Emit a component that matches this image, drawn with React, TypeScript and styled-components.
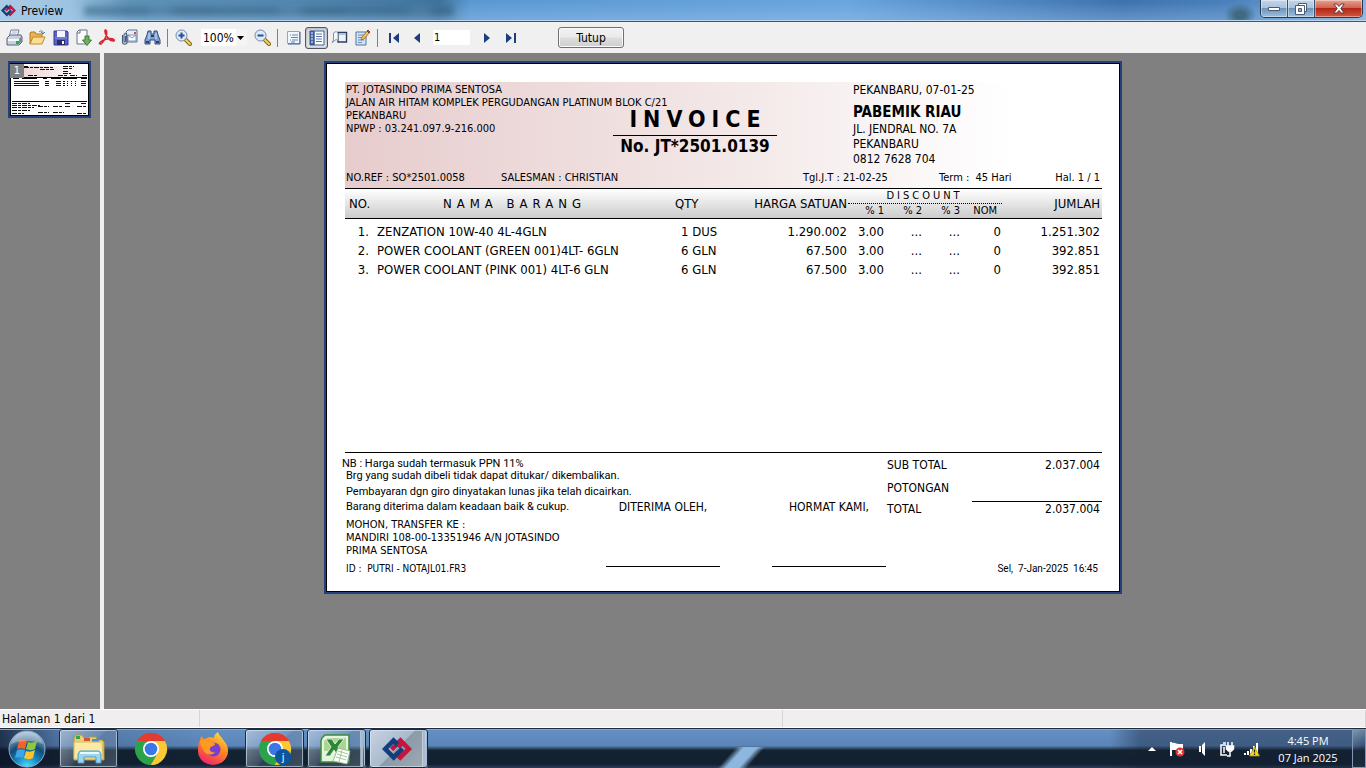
import React from "react";
import styled, { createGlobalStyle, css } from "styled-components";

const GlobalStyle = createGlobalStyle`
  *, *::before, *::after { box-sizing: border-box; }
  html, body, #root { height: 100%; }
  body {
    margin: 0;
    overflow: hidden;
    background: #808080;
    color: #000;
    font-family: "DejaVu Sans Condensed", "Noto Sans", sans-serif;
    font-size: 12px;
  }
  button, input, select { font: inherit; color: inherit; padding: 0; margin: 0; border: 0; border-radius: 0; }
  h1, h2, p, dl, dt, dd { margin: 0; font-weight: normal; }
  svg { display: block; flex: none; }
`;

const Desktop = styled.div`
  display: flex;
  flex-direction: column;
  height: 100%;
`;

/* ---------- window chrome ---------- */

const TitleBar = styled.header`
  display: flex;
  align-items: flex-start;
  justify-content: space-between;
  height: 22px;
  border-bottom: 1px solid #38577c;
  box-shadow: inset 0 -1px #b9d5f0;
  background:
    radial-gradient(ellipse 16px 12px at 1240px 15px, #3f6a80 30%, transparent),
    linear-gradient(180deg, transparent 10%, rgba(160, 200, 240, 0.35) 90%),
    linear-gradient(90deg, #a9cbe4 0, #9cc3df 70px, #5f93b8 130px, #5487b0 300px, #3f749c 440px, #5b98d2 470px, #6aa5dd 62%, #3f73ae 82%, #4a80bb 90%, #88b4de 100%);
`;

const WindowTitle = styled.h1`
  display: flex;
  align-items: center;
  gap: 5px;
  height: 21px;
  padding-left: 1px;
  font-size: 12px;
`;

const TitleGhost = styled.span`
  width: 370px;
  height: 10px;
  margin-left: 16px;
  background: repeating-linear-gradient(90deg, #2e5f80 0 60px, #447395 70px 80px, #2b5878 95px 130px);
  opacity: 0.55;
  filter: blur(3px);
`;

const WindowButtons = styled.div`
  display: flex;
  height: 18px;
  margin-right: 3px;
  border: 1px solid #25394f;
  border-top: 0;
  border-radius: 0 0 5px 5px;
  overflow: hidden;
`;

const WindowButton = styled.button<{ $close?: boolean }>`
  display: grid;
  place-items: center;
  width: ${(p) => (p.$close ? 47 : 27)}px;
  background: ${(p) =>
    p.$close
      ? "linear-gradient(#e9a08f 0, #d0644f 45%, #b3261a 50%, #d2583c 100%)"
      : "linear-gradient(#c3d6ea 0, #a9c2dd 45%, #6f94bb 50%, #9dbfe0 100%)"};
  border-right: ${(p) => (p.$close ? "0" : "1px solid #3b526d")};
  box-shadow: inset 0 0 0 1px rgba(255, 255, 255, 0.4);
`;

/* ---------- toolbar ---------- */

const Toolbar = styled.div`
  display: flex;
  align-items: center;
  height: 31px;
  padding-left: 3px;
  background: #f0f0f0;
`;

const ToolButton = styled.button<{ $pressed?: boolean }>`
  display: grid;
  place-items: center;
  width: 23px;
  height: 22px;
  background: none;
  ${(p) =>
    p.$pressed &&
    css`
      border: 1px solid #53585e;
      border-radius: 3px;
      background: linear-gradient(#cfd3d8, #e6e8ea);
      box-shadow: inset 0 0 2px #8a8f96;
    `}
`;

const Separator = styled.span`
  width: 1px;
  height: 18px;
  margin: 0 4px 0 3px;
  background: #808080;
`;

const ZoomBox = styled.div`
  display: flex;
  align-items: center;
  width: 46px;
  height: 17px;
  margin: 0 4px 0 6px;
  background: linear-gradient(90deg, #fff 35px, #f4f4f4 35px);
`;

const ZoomSelect = styled.select`
  appearance: none;
  width: 36px;
  height: 17px;
  padding-left: 2px;
  background: none;
  font-size: 12px;
`;

const PageInput = styled.input`
  width: 37px;
  height: 15px;
  margin: 0 6px 0 5px;
  padding-left: 1px;
  background: #fff;
  font-size: 11px;
`;

const CloseButton = styled.button`
  width: 66px;
  height: 21px;
  margin-left: 36px;
  border: 1px solid #707070;
  border-radius: 3px;
  background: linear-gradient(#f2f2f2 0, #ebebeb 48%, #dddddd 52%, #cfcfcf 100%);
  box-shadow: inset 0 0 0 1px #fafafa;
  font-size: 12px;
`;

/* ---------- preview area ---------- */

const Workspace = styled.main`
  display: flex;
  flex: 1;
  min-height: 0;
  background: #808080;
`;

const Thumbnails = styled.nav`
  width: 104px;
  padding: 8px;
  border-right: 4px solid #f0f0f0;
`;

const Thumbnail = styled.button`
  display: block;
  position: relative;
  width: 83px;
  height: 57px;
  border: 2px solid #24407a;
  outline: 0;
  background: #fff;
`;

const ThumbnailNumber = styled.span`
  position: absolute;
  top: 1px;
  left: 0;
  width: 14px;
  height: 14px;
  background: #808080;
  color: #fff;
  font-size: 11px;
  line-height: 14px;
`;

const Viewer = styled.section`
  flex: 1;
  display: flex;
  justify-content: center;
  align-items: flex-start;
  padding: 8px 24px 8px 0;
  overflow: hidden;
`;

const Sheet = styled.article`
  width: 798px;
  padding: 19px 18px 18px 19px;
  border: 2px solid #24407a;
  box-shadow: inset 0 0 0 1px #000;
  background: #fff;
`;

const Letterhead = styled.header`
  display: flex;
  flex-direction: column;
  justify-content: space-between;
  height: 107px;
  border-bottom: 1px solid #000;
  background: linear-gradient(90deg, #e7cccd 0, #f3e7e7 50%, #fff 88%);
`;

const LetterheadTop = styled.div`
  display: flex;
`;

const Company = styled.address`
  width: 268px;
  padding: 1px 0 0 1px;
  font-size: 11px;
  font-style: normal;
  line-height: 13px;
  white-space: pre;
`;

const InvoiceTitle = styled.div`
  width: 164px;
  padding-top: 25px;
  text-align: center;
  font-weight: bold;
`;

const InvoiceName = styled.h2`
  padding: 0 0 4px 6px;
  border-bottom: 1px solid #000;
  font-size: 23px;
  font-weight: bold;
  line-height: 24px;
  letter-spacing: 6px;
`;

const InvoiceNumber = styled.p`
  font-size: 17px;
  font-weight: bold;
  line-height: 21px;
  white-space: nowrap;
`;

const Customer = styled.address`
  padding: 1px 0 0 76px;
  font-style: normal;
  line-height: 15px;
`;

const CustomerName = styled.strong`
  display: block;
  margin-top: 4px;
  font-size: 15px;
  line-height: 20px;
`;

const MetaRow = styled.div`
  display: grid;
  grid-template-columns: 155px 302px 136px 1fr auto;
  padding: 0 2px 2px 1px;
  font-size: 11px;
  line-height: 16px;
  white-space: pre;
`;

const ItemsArea = styled.div`
  min-height: 264px;
  border-bottom: 1px solid #000;
`;

const ItemsTable = styled.table`
  width: 100%;
  table-layout: fixed;
  border-collapse: separate;
  border-spacing: 0;
  white-space: pre;

  thead { background: linear-gradient(#fff, #cacaca); }
  tbody::before { content: ""; display: block; height: 3px; }
`;

type CellProps = { $align?: "left" | "right" | "center"; $indent?: number; $end?: number; $track?: number };

const HeadCell = styled.th<CellProps>`
  height: 14px;
  padding: 1px ${(p) => p.$end ?? 1}px 0 ${(p) => p.$indent ?? 0}px;
  border-bottom: 1px solid #000;
  font-size: 13px;
  font-weight: normal;
  line-height: 14px;
  letter-spacing: ${(p) => p.$track ?? 0}px;
  text-align: ${(p) => p.$align ?? "left"};
`;

const DiscountHead = styled(HeadCell)`
  padding-top: 0;
  border-bottom: 1px dotted #000;
  font-size: 11px;
`;

const SubHead = styled(HeadCell)`
  padding-top: 0;
  font-size: 11px;
`;

const Cell = styled.td<CellProps>`
  height: 19px;
  padding: 0 ${(p) => p.$end ?? 1}px 0 ${(p) => p.$indent ?? 0}px;
  font-size: 13px;
  line-height: 19px;
  text-align: ${(p) => p.$align ?? "right"};
`;

const ItemFooter = styled.footer`
  display: flex;
  height: 121px;
`;

const Notes = styled.div`
  width: 265px;
  margin-left: -4px;
  padding-top: 5px;
  font-size: 11px;
  white-space: pre;
`;

const NoteBlock = styled.p<{ $line: number; $gap?: number; $indent?: boolean; $small?: boolean; $prose?: boolean }>`
  margin-top: ${(p) => p.$gap ?? 0}px;
  padding-left: ${(p) => (p.$indent ? 5 : 1)}px;
  line-height: ${(p) => p.$line}px;
  font-size: ${(p) => (p.$small ? 10 : 11)}px;
  ${(p) => p.$prose && "font-family: Roboto, sans-serif;"}
`;

const Signature = styled.div`
  width: 114px;
  height: 67px;
  margin: 47px 52px 0 0;
  border-bottom: 1px solid #000;
  line-height: 15px;
  text-align: center;
  white-space: nowrap;

  & + & { margin-right: 1px; }
`;

const Totals = styled.div`
  flex: 1;
  display: flex;
  flex-direction: column;
  justify-content: space-between;
  padding-top: 1px;
`;

const TotalsList = styled.dl`
  display: grid;
  grid-template-columns: 1fr 130px;
  line-height: 23px;

  dd { padding-right: 2px; text-align: right; }
`;

const GrandLabel = styled.dt`
  padding-top: 2px;
  line-height: 15px;
`;

const GrandTotal = styled.dd`
  margin-top: 1px;
  border-top: 1px solid #000;
  line-height: 15px;
`;

const PrintedAt = styled.p`
  padding-right: 4px;
  font-family: Roboto, sans-serif;
  font-size: 10px;
  line-height: 11px;
  text-align: right;
  white-space: pre;
`;

const StatusBar = styled.div`
  display: flex;
  align-items: center;
  height: 19px;
  border-top: 1px solid #fff;
  border-bottom: 1px solid #fff;
  background: #f0eeee;
`;

const StatusPane = styled.span<{ $width?: number }>`
  ${(p) => (p.$width ? `width: ${p.$width}px;` : "flex: 1;")}
  height: 17px;
  padding-left: 2px;
  border-right: 1px solid #d6d4d4;
  font-size: 12px;
  line-height: 19px;
`;

/* ---------- taskbar ---------- */

const Taskbar = styled.footer`
  display: flex;
  align-items: center;
  height: 40px;
  border-top: 1px solid #1d2c40;
  box-shadow: inset 0 1px #86a8d0;
  background:
    linear-gradient(90deg, rgba(10, 20, 40, 0.75) 0, rgba(10, 20, 40, 0.2) 60px, transparent 220px, transparent 1110px, rgba(20, 30, 50, 0.4) 1140px),
    linear-gradient(132deg, transparent 31%, #8db7de 42%, #8db7de 58%, transparent 69%) 712px 18px / 58px 22px no-repeat,
    linear-gradient(#6490c2 0, #5b85b9 43%, #3b5a80 48%, #142330 55%, #122031 90%, #2c4058 100%);
`;

const StartButton = styled.button`
  display: grid;
  place-items: center;
  width: 54px;
  margin-right: 5px;
  background: none;
`;

const TaskButton = styled.button<{ $state?: "open" | "active"; $stacked?: boolean }>`
  display: grid;
  place-items: center;
  width: 59px;
  height: 39px;
  margin-right: 3px;
  border: 1px solid transparent;
  background: none;
  ${(p) =>
    p.$state &&
    css`
      border-color: #a7bbd0;
      border-radius: 3px;
      outline: 1px solid #1a2a3c;
      outline-offset: -1px;
      box-shadow: inset 0 0 0 1px rgba(230, 240, 250, 0.55);
      background: ${p.$state === "active"
        ? "linear-gradient(135deg, #c6d3e4 0, #a9b9cc 50%, #8c9baa 51%, #9ea8b1 100%)"
        : "linear-gradient(135deg, rgba(200, 215, 235, 0.65), rgba(150, 170, 195, 0.35) 48%, rgba(110, 130, 150, 0.3) 52%, rgba(140, 160, 180, 0.35))"};
    `}
  ${(p) =>
    p.$stacked &&
    css`
      border-right: 5px double #a7bbd0;
    `}
`;

const Tray = styled.div`
  display: flex;
  align-items: center;
  gap: 9px;
  margin-left: auto;
`;

const TrayButton = styled.button`
  display: grid;
  place-items: center;
  width: 16px;
  height: 20px;
  background: none;
`;

const Clock = styled.time`
  width: 84px;
  margin-left: -3px;
  color: #fff;
  font-family: "Open Sans", sans-serif;
  font-size: 11px;
  line-height: 17px;
  text-align: center;
`;

const ShowDesktop = styled.button`
  width: 14px;
  height: 39px;
  margin-left: -7px;
  border: 1px solid #8298b2;
  background: linear-gradient(150deg, rgba(180, 200, 220, 0.5), rgba(40, 60, 80, 0.3) 50%);
`;

/* ---------- drawings ---------- */

const BrandIcon = ({ size, height }: { size: number; height: number }) => (
  <svg width={size} height={height} viewBox="0 0 30 24" fill="none" strokeWidth="4.6">
    <path d="M9.500 12.500L18.500 3.500 26.800 12l-8.500 8.500-5-5" stroke="#c8143c" />
    <path d="M16.500 8.500l-5-5L3.200 12l8.500 8.500 8.800-8.800" stroke="#123f7c" />
    <path d="M20.500 5.500L16 10" stroke="#c8143c" />
  </svg>
);

const PrintIcon = () => (
  <svg width="17" height="17" viewBox="0 0 17 17">
    <path d="M5 1h8l-2 7H3z" fill="#fff" stroke="#6b7c96" />
    <path d="M1 9l3-3h11l1 2v5l-3 3H1z" fill="#c9d1de" stroke="#58677f" />
    <path d="M2 10h11v2H2z" fill="#f7f9fc" />
    <path d="M13 10l3-3v5l-3 3z" fill="#7988a0" />
    <path d="M10 12h3v3h-3z" fill="#35a83a" />
    <path d="M6 3h5M5 5h5" stroke="#9fb0c8" />
  </svg>
);
const OpenIcon = () => (
  <svg width="17" height="17" viewBox="0 0 17 17">
    <path d="M1 15V4l1-1h4l1 2h6v3" fill="#e6b455" stroke="#b37a1f" />
    <path d="M1 15l3-7h12l-3 7z" fill="#fbdd8d" stroke="#c08a2c" />
    <path d="M10 3c2-2 4-1 4 1m-2-1l2 2 2-2" fill="none" stroke="#5877a8" />
  </svg>
);
const SaveIcon = () => (
  <svg width="16" height="16" viewBox="0 0 16 16">
    <path d="M1 1h13l1 1v13H1z" fill="#5a62c8" stroke="#353b92" />
    <path d="M4 1h8v6H4z" fill="#f3f5ff" />
    <path d="M4 10h8v5H4z" fill="#272e70" />
    <path d="M9 11h2v3H9z" fill="#fff" />
    <path d="M2 8h12" stroke="#8b93e8" />
  </svg>
);
const ExportIcon = () => (
  <svg width="17" height="17" viewBox="0 0 17 17">
    <path d="M2 3l2-2h8v14H2z" fill="#f8fafc" stroke="#66758c" />
    <path d="M2 4h3V1" fill="none" stroke="#66758c" />
    <path d="M10 7h4v4h2.500L12 16.500 7.500 11H10z" fill="#6fae5c" stroke="#3f7b34" />
  </svg>
);
const PdfIcon = () => (
  <svg width="17" height="17" viewBox="0 0 17 17" fill="none" stroke="#d9272e" strokeWidth="1.600">
    <path d="M7.500 1c-1.500 1 0 4 1.500 6.500S13.500 12 16 12c1-2-3-3-7-2s-7 3-7.500 4.500C3 16.500 6 12 7.500 8.500S9 2 7.500 1z" />
  </svg>
);
const MailIcon = () => (
  <svg width="17" height="17" viewBox="0 0 17 17" fill="none">
    <path d="M5 3l2-2h9v12H6z" fill="#e7eef8" stroke="#5a7096" />
    <path d="M7 6h8v6H7z" fill="#fff" stroke="#7c92b7" />
    <path d="M7 6l4 3 4-3" stroke="#7c92b7" />
    <path d="M13 3h2v2h-2z" fill="#d9483c" />
    <path d="M1.500 6v7c0 3 4.500 3 4.500 0V6c0-2-3-2-3 0v6c0 1.500 1.500 1.500 1.500 0V7" stroke="#44597e" strokeWidth="1.100" />
  </svg>
);
const FindIcon = () => (
  <svg width="17" height="17" viewBox="0 0 17 17">
    <path d="M4 2h3v3h3V2h3l1 4 2 5v4h-5v-4H6v4H1v-4l2-5z" fill="#7f9fd0" stroke="#2f4a80" />
    <path d="M2 12h3v2H2zM12 12h3v2h-3z" fill="#27407a" />
    <path d="M5 4v6M12 4v6" stroke="#d5e2f6" />
    <path d="M7 7h3" stroke="#27407a" strokeWidth="2" />
  </svg>
);
const LensIcon = ({ plus }: { plus?: boolean }) => (
  <svg width="17" height="17" viewBox="0 0 17 17">
    <path d="M10 10l5 5" stroke="#8c6a1c" strokeWidth="4" strokeLinecap="round" />
    <path d="M11 11l4 4" stroke="#f2cf5a" strokeWidth="2" strokeLinecap="round" />
    <circle cx="6.500" cy="6.500" r="5.500" fill="#dcebf9" stroke="#6f86a8" />
    <path d={plus ? "M3.500 6.500h6M6.500 3.500v6" : "M3.500 6.500h6"} stroke="#2b4f8c" strokeWidth="2" />
  </svg>
);
const FullPageIcon = () => (
  <svg width="14" height="14" viewBox="0 0 14 14">
    <path d="M.5.5h12v12H.5z" fill="#f2f7fd" stroke="#8ba7d0" />
    <path d="M1 13h12V1" fill="none" stroke="#3f5c8c" />
    <path d="M3 4h1M5 4h6M4 6.500h7M3 9h1M5 9h6M4 11h4" stroke="#6482b8" />
  </svg>
);
const OutlineIcon = () => (
  <svg width="16" height="16" viewBox="0 0 16 16">
    <path d="M5 1h10v14H5z" fill="#fff" stroke="#3d6199" />
    <path d="M1 1h4v14H1z" fill="#4b6fa8" stroke="#2f5087" />
    <path d="M2 3h2M2 6h2M2 9h2M2 12h2" stroke="#e3edfb" />
    <path d="M7 4h6M7 6.500h6M7 9h6M7 11.500h6" stroke="#5478b4" />
  </svg>
);
const MarginIcon = () => (
  <svg width="17" height="15" viewBox="0 0 17 15">
    <path d="M7 2.500h8.500v9.500H7z" fill="#eef3fa" stroke="#2b3f5c" strokeWidth="1.400" />
    <path d="M1 13l1.500-3V3L5 1.500 7 3v7.500L5 9.500 3 11z" fill="#f7fafd" stroke="#7f93ae" />
    <path d="M8 4h6.500" stroke="#b2c4de" strokeWidth="2" />
  </svg>
);
const EditIcon = () => (
  <svg width="16" height="17" viewBox="0 0 16 17">
    <path d="M1 3h10v13H1z" fill="#d7e4f6" stroke="#55739f" />
    <path d="M3 6h6M3 8.500h6M3 11h6M3 13.500h4" stroke="#6a8abd" />
    <path d="M6 11l1-3 6-7 2 2-6 7z" fill="#efc45b" stroke="#8d6a2b" strokeWidth=".8" />
    <path d="M12 2l1-1 2 2-1 1z" fill="#d0463c" stroke="#a03028" />
  </svg>
);
const NavIcon = ({ kind }: { kind: "first" | "prev" | "next" | "last" }) => (
  <svg width="12" height="12" viewBox="0 0 12 12" fill="#1f3d7c">
    {kind === "first" && <path d="M1 1h2v10H1zM11 1v10L5 6z" />}
    {kind === "prev" && <path d="M9 1v10L3 6z" />}
    {kind === "next" && <path d="M2 1v10l6-5z" />}
    {kind === "last" && <path d="M9 1h2v10H9zM1 1v10l6-5z" />}
  </svg>
);

const textLine = (x: number, y: number, w: number) => `M${x} ${y}h${w}`;
const ThumbnailDrawing = () => (
  <svg width="79" height="53" viewBox="0 0 79 53" shapeRendering="crispEdges">
    <defs>
      <linearGradient id="thumbTint">
        <stop offset="0" stopColor="#e9d0d1" />
        <stop offset="1" stopColor="#fff" />
      </linearGradient>
    </defs>
    <path d="M.5.5h78v52H.5z" fill="#fff" stroke="#000" />
    <path d="M2 2.500h75v11H2z" fill="url(#thumbTint)" />
    <path d="M2 14h75M2 38.500h75" stroke="#000" />
    <path
      d={[
        [14, 3.500, 4], [14, 4.500, 30], [53, 3.500, 11], [30, 6.500, 14], [53, 5.500, 10], [53, 8.500, 6], [53, 10.500, 8],
        [2, 12.500, 10], [18, 12.500, 10], [48, 12.500, 9], [60, 12.500, 7], [72, 12.500, 5],
        [2, 40.500, 18], [2, 42.500, 28], [2, 44.500, 22], [28, 43.500, 11], [43, 43.500, 10], [55, 40.500, 6],
        [55, 43.500, 5], [71, 40.500, 5], [67, 43.500, 10], [2, 47.500, 18], [2, 50.500, 12], [28, 49.500, 11], [43, 49.500, 11], [67, 50.500, 9],
      ].map(([x, y, w]) => textLine(x, y, w)).join("")}
      stroke="#111"
      strokeDasharray="5 1 3 1"
    />
    <path d="M3 15.500h6M12 15.500h15M33 15.500h4M41 15.500h10M53 15.500h14M71 15.500h6" stroke="#000" />
    {[18.5, 20.5, 22.5].map((y) => (
      <path key={y} d={`M4 ${y}h25M35 ${y}h4M46 ${y}h5M53 ${y}h2M57 ${y}h1M61 ${y}h1M65 ${y}h1M71 ${y}h5`} stroke="#111" />
    ))}
  </svg>
);

const StartOrb = () => (
  <svg width="38" height="38" viewBox="0 0 38 38">
    <defs>
      <radialGradient id="orb" cx=".5" cy="1" r="1">
        <stop offset="0" stopColor="#4fe0ff" />
        <stop offset=".35" stopColor="#1583bd" />
        <stop offset=".6" stopColor="#144a78" />
        <stop offset="1" stopColor="#a9c3da" />
      </radialGradient>
    </defs>
    <circle cx="19" cy="19" r="18" fill="url(#orb)" stroke="#8fb0cb" />
    <path d="M11 11c3-2 5-1 8 0l-2 8c-3-1-5-1-8 0z" fill="#f0642c" />
    <path d="M20 12c3 1 5 1 9-1l-2 8c-4 2-6 1-9 0z" fill="#8dc63f" />
    <path d="M9 20c3-1 5-1 8 0l-2 8c-3-1-5-1-8 0z" fill="#3fa4ea" />
    <path d="M18 21c3 1 5 1 9-1l-2 8c-4 2-6 1-9 0z" fill="#fcc42a" />
    <path d="M3 14C6 4 13 2 19 2s13 2 16 12c-8-4-24-4-32 0z" fill="#fff" opacity=".3" />
  </svg>
);
const ExplorerIcon = () => (
  <svg width="34" height="32" viewBox="0 0 34 32">
    <path d="M2 5l2-3h6l2 3h4l1-1h7l1 3h5l2 2v18H2z" fill="#e9cf78" stroke="#b8983c" />
    <path d="M4 3h4v3H4z" fill="#33a544" />
    <path d="M12 5h6v3h-6z" fill="#d4532f" />
    <path d="M20 6h7v3h-7z" fill="#4b8fd6" />
    <path d="M2 9h28l1 17H2z" fill="#fbe9a5" stroke="#d9bc62" />
    <path d="M6 30V21l2-3h19l2 3v9h-5v-6H12v6z" fill="#9fd4ef" stroke="#4b9dc8" />
    <path d="M8 20h19" stroke="#e8f8ff" strokeWidth="2" />
  </svg>
);
const ChromeIcon = ({ badge }: { badge?: string }) => (
  <svg width="34" height="34" viewBox="0 0 34 34">
    <path d="M17 17L3.100 9A16 16 0 0 1 30.900 9z" fill="#e33b2e" />
    <path d="M17 17L30.900 9A16 16 0 0 1 17 33z" fill="#fcc934" />
    <path d="M17 17v16A16 16 0 0 1 3.100 9z" fill="#2ba24c" />
    <path d="M17 9h13.900L24 21z" fill="#fcc934" />
    <path d="M3.100 9L10 21l7-4-4-8z" fill="#2ba24c" />
    <path d="M3.100 9h27.800a16 16 0 0 0-27.800 0z" fill="#e33b2e" />
    <path d="M24 21l-7 12-5-1 5-7z" fill="#2ba24c" />
    <path d="M24 21l-7 12a16 16 0 0 0 8-2z" fill="#fcc934" />
    <circle cx="17" cy="17" r="8" fill="#fff" />
    <circle cx="17" cy="17" r="6.300" fill="#3b78e7" />
    {badge && (
      <>
        <circle cx="25" cy="25" r="8" fill="#0c56a0" />
        <text x="25" y="29" fill="#fff" fontSize="11" textAnchor="middle">{badge}</text>
      </>
    )}
  </svg>
);
const FirefoxIcon = () => (
  <svg width="32" height="34" viewBox="0 0 32 34">
    <defs>
      <linearGradient id="fox" x1=".8" y1="0" x2=".3" y2="1">
        <stop offset="0" stopColor="#ffe14a" />
        <stop offset=".45" stopColor="#ff8a1f" />
        <stop offset="1" stopColor="#f0246a" />
      </linearGradient>
    </defs>
    <path d="M3 8c0-2 1-3 2-4 0 2 1 3 3 3 3-2 6-2 9-1 0-3 2-5 4-6 1 4 4 5 6 9 3 3 4 7 4 10a15 14 0 0 1-30 0c0-4 0-8 2-11z" fill="url(#fox)" />
    <circle cx="16.500" cy="17.500" r="7" fill="#7a3fd0" />
    <path d="M3 9c4-2 7-1 10 1 3 0 5 1 5 2 0 2-4 2-5 4-1 3 2 5 5 4-3 4-9 3-11-1-2-3-4-6-4-10z" fill="#ff9a21" />
  </svg>
);
const ExcelIcon = () => (
  <svg width="32" height="32" viewBox="0 0 32 32">
    <path d="M3 5l3-3h24v27H2V8z" fill="#e6f3e0" stroke="#3d8a3c" strokeWidth="1.500" />
    <path d="M5 8l3-3h19v13H5z" fill="#a9d793" />
    <path d="M7 6h6l3 5 4-5h5l-6 8 6 9h-6l-4-6-4 6H6l6-9z" fill="#2f8637" stroke="#f0f9ec" strokeWidth=".8" />
    <path d="M14 28l5-13 12 3-3 13z" fill="#fff" stroke="#8ebf86" />
    <path d="M19 18l10 3M18 21l10 3M17 24l10 3M23 17l-3 12" stroke="#a3c99d" />
  </svg>
);
const FlagIcon = () => (
  <svg width="16" height="16" viewBox="0 0 16 16">
    <path d="M1 1h2v14H1zM3 2c3-1 4 1 7 1h4v6H3z" fill="#fff" />
    <circle cx="11" cy="11" r="4.500" fill="#e0322a" />
    <path d="M9 9l4 4M13 9l-4 4" stroke="#fff" strokeWidth="1.600" />
  </svg>
);
const SpeakerIcon = () => (
  <svg width="16" height="16" viewBox="0 0 16 16" fill="#fff">
    <path d="M5 5h2v6H5zM8 4l3-3v14l-3-3z" />
  </svg>
);
const PowerIcon = () => (
  <svg width="16" height="16" viewBox="0 0 16 16" fill="none" stroke="#fff" strokeWidth="1.500">
    <path d="M7 4H2v10h6M4 2h3M5 6v6" />
    <path d="M9 1v4M13 1v4" />
    <path d="M7.500 5h7v3l-2 2h-3l-2-2z" fill="#fff" />
    <path d="M11 10v5H8" />
  </svg>
);
const NetworkIcon = () => (
  <svg width="16" height="16" viewBox="0 0 16 16">
    <path d="M0 12h2v2H0zM3 10h2v4H3zM6 8h2v6H6zM9 5h2v9H9zM12 2h2v12h-2z" fill="#fff" />
    <path d="M10.500 5.500l5 9.500h-10z" fill="#f7d722" stroke="#a58a08" strokeWidth=".7" />
    <path d="M10.500 8.500v3M10.500 12.500v1.500" stroke="#222" strokeWidth="1.300" />
  </svg>
);

/* ---------- data ---------- */

const tools = [
  ["Print", <PrintIcon />],
  ["Open", <OpenIcon />],
  ["Save", <SaveIcon />],
  ["Export", <ExportIcon />],
  ["PDF", <PdfIcon />],
  ["E-mail", <MailIcon />],
  ["Find", <FindIcon />],
] as const;

const items = [
  ["1.", "ZENZATION 10W-40 4L-4GLN", "1 DUS", "1.290.002", "3.00", "...", "...", "0", "1.251.302"],
  ["2.", "POWER COOLANT (GREEN 001)4LT- 6GLN", "6 GLN", "67.500", "3.00", "...", "...", "0", "392.851"],
  ["3.", "POWER COOLANT (PINK 001) 4LT-6 GLN", "6 GLN", "67.500", "3.00", "...", "...", "0", "392.851"],
];

const columnWidths = [25, 290, 80, 108, 37, 38, 38, 41, 100];

const Invoice = () => (
  <Sheet>
    <Letterhead>
      <LetterheadTop>
        <Company>
          {"PT. JOTASINDO PRIMA SENTOSA\nJALAN AIR HITAM KOMPLEK PERGUDANGAN PLATINUM BLOK C/21\nPEKANBARU\nNPWP : 03.241.097.9-216.000"}
        </Company>
        <InvoiceTitle>
          <InvoiceName>INVOICE</InvoiceName>
          <InvoiceNumber>No. JT*2501.0139</InvoiceNumber>
        </InvoiceTitle>
        <Customer>
          <div>PEKANBARU, 07-01-25</div>
          <CustomerName>PABEMIK RIAU</CustomerName>
          <div>JL. JENDRAL NO. 7A</div>
          <div>PEKANBARU</div>
          <div>0812 7628 704</div>
        </Customer>
      </LetterheadTop>
      <MetaRow>
        <span>NO.REF : SO*2501.0058</span>
        <span>SALESMAN : CHRISTIAN</span>
        <span>Tgl.J.T : 21-02-25</span>
        <span>{"Term :  45 Hari"}</span>
        <span>Hal. 1 / 1</span>
      </MetaRow>
    </Letterhead>
    <ItemsArea>
      <ItemsTable>
        <colgroup>
          {columnWidths.map((w, i) => (
            <col key={i} width={w} />
          ))}
        </colgroup>
        <thead>
          <tr>
            <HeadCell rowSpan={2} $indent={4}>NO.</HeadCell>
            <HeadCell rowSpan={2} $align="center" $end={1} $track={5}>NAMA BARANG</HeadCell>
            <HeadCell rowSpan={2} $indent={15}>QTY</HeadCell>
            <HeadCell rowSpan={2} $align="right">HARGA SATUAN</HeadCell>
            <DiscountHead colSpan={4} $align="center" $track={3}>DISCOUNT</DiscountHead>
            <HeadCell rowSpan={2} $align="right" $end={2}>JUMLAH</HeadCell>
          </tr>
          <tr>
            <SubHead $align="right">% 1</SubHead>
            <SubHead $align="right">% 2</SubHead>
            <SubHead $align="right">% 3</SubHead>
            <SubHead $align="right" $end={5}>NOM</SubHead>
          </tr>
        </thead>
        <tbody>
          {items.map((row) => (
            <tr key={row[0]}>
              {row.map((value, i) => (
                <Cell
                  key={i}
                  $align={i === 1 || i === 2 ? "left" : "right"}
                  $indent={i === 1 ? 7 : i === 2 ? 21 : 0}
                  $end={i === 8 ? 2 : 1}
                >
                  {value}
                </Cell>
              ))}
            </tr>
          ))}
        </tbody>
      </ItemsTable>
    </ItemsArea>
    <ItemFooter>
      <Notes>
        <NoteBlock $line={12} $prose>NB : Harga sudah termasuk PPN 11%</NoteBlock>
        <NoteBlock $line={12} $indent $prose>Brg yang sudah dibeli tidak dapat ditukar/ dikembalikan.</NoteBlock>
        <NoteBlock $line={15} $gap={2} $indent $prose>
          {"Pembayaran dgn giro dinyatakan lunas jika telah dicairkan.\nBarang diterima dalam keadaan baik & cukup."}
        </NoteBlock>
        <NoteBlock $line={13} $gap={4} $indent>
          {"MOHON, TRANSFER KE :\nMANDIRI 108-00-13351946 A/N JOTASINDO\nPRIMA SENTOSA"}
        </NoteBlock>
        <NoteBlock $line={12} $gap={6} $indent $small>
          {"ID :  PUTRI - NOTAJL01.FR3"}
        </NoteBlock>
      </Notes>
      <Signature>DITERIMA OLEH,</Signature>
      <Signature>HORMAT KAMI,</Signature>
      <Totals>
        <TotalsList>
          <dt>SUB TOTAL</dt>
          <dd>2.037.004</dd>
          <dt>POTONGAN</dt>
          <dd />
          <GrandLabel>TOTAL</GrandLabel>
          <GrandTotal>2.037.004</GrandTotal>
        </TotalsList>
        <PrintedAt>{"Sel,  7-Jan-2025  16:45"}</PrintedAt>
      </Totals>
    </ItemFooter>
  </Sheet>
);

export default function App() {
  return (
    <Desktop>
      <GlobalStyle />
      <TitleBar>
        <WindowTitle>
          <BrandIcon size={15} height={13} />
          Preview
          <TitleGhost />
        </WindowTitle>
        <WindowButtons>
          <WindowButton aria-label="Minimize">
            <svg width="12" height="6" viewBox="0 0 12 6"><path d="M.5 1.500h11v3H.5z" fill="#fff" stroke="#4a5a70" /></svg>
          </WindowButton>
          <WindowButton aria-label="Restore">
            <svg width="12" height="12" viewBox="0 0 12 12" fill="#fff" stroke="#4a5a70">
              <path d="M3.500.5h8v8h-8z" />
              <path d="M.5 2.500h9v9h-9z" />
              <path d="M3.500 5.500h3v3h-3z" fill="#8fb0d4" />
            </svg>
          </WindowButton>
          <WindowButton $close aria-label="Close">
            <svg width="12" height="11" viewBox="0 0 12 11">
              <path d="M.8 1h3l2.200 2.500L8.200 1h3L7.800 5.500l3.400 4.500h-3L6 7.500 3.800 10h-3l3.400-4.500z" fill="#fff" stroke="#5a3a40" />
            </svg>
          </WindowButton>
        </WindowButtons>
      </TitleBar>

      <Toolbar role="toolbar">
        {tools.map(([label, icon]) => (
          <ToolButton key={label} aria-label={label}>{icon}</ToolButton>
        ))}
        <Separator />
        <ToolButton aria-label="Zoom in"><LensIcon plus /></ToolButton>
        <ZoomBox>
          <ZoomSelect aria-label="Zoom" defaultValue="100%">
            <option>100%</option>
            <option>50%</option>
          </ZoomSelect>
          <svg width="7" height="4" viewBox="0 0 7 4"><path d="M0 0h7L3.500 4z" /></svg>
        </ZoomBox>
        <ToolButton aria-label="Zoom out"><LensIcon /></ToolButton>
        <Separator />
        <ToolButton aria-label="Full screen"><FullPageIcon /></ToolButton>
        <ToolButton aria-label="Thumbnails" $pressed><OutlineIcon /></ToolButton>
        <ToolButton aria-label="Page settings"><MarginIcon /></ToolButton>
        <ToolButton aria-label="Edit page"><EditIcon /></ToolButton>
        <Separator />
        <ToolButton aria-label="First page"><NavIcon kind="first" /></ToolButton>
        <ToolButton aria-label="Previous page"><NavIcon kind="prev" /></ToolButton>
        <PageInput aria-label="Page" defaultValue="1" />
        <ToolButton aria-label="Next page"><NavIcon kind="next" /></ToolButton>
        <ToolButton aria-label="Last page"><NavIcon kind="last" /></ToolButton>
        <CloseButton>Tutup</CloseButton>
      </Toolbar>

      <Workspace>
        <Thumbnails aria-label="Pages">
          <Thumbnail aria-label="Page 1">
            <ThumbnailDrawing />
            <ThumbnailNumber>1</ThumbnailNumber>
          </Thumbnail>
        </Thumbnails>
        <Viewer>
          <Invoice />
        </Viewer>
      </Workspace>

      <StatusBar>
        <StatusPane $width={200}>Halaman 1 dari 1</StatusPane>
        <StatusPane $width={583} />
        <StatusPane />
      </StatusBar>

      <Taskbar>
        <StartButton aria-label="Start"><StartOrb /></StartButton>
        <TaskButton $state="open" aria-label="Windows Explorer"><ExplorerIcon /></TaskButton>
        <TaskButton aria-label="Google Chrome"><ChromeIcon /></TaskButton>
        <TaskButton aria-label="Firefox"><FirefoxIcon /></TaskButton>
        <TaskButton $state="open" aria-label="Google Chrome profile"><ChromeIcon badge="j" /></TaskButton>
        <TaskButton $state="open" $stacked aria-label="Excel"><ExcelIcon /></TaskButton>
        <TaskButton $state="active" $stacked aria-label="Invoice program"><BrandIcon size={30} height={24} /></TaskButton>
        <Tray>
          <TrayButton aria-label="Show hidden icons">
            <svg width="8" height="4" viewBox="0 0 8 4"><path d="M0 4h8L4 0z" fill="#fff" /></svg>
          </TrayButton>
          <TrayButton aria-label="Action center"><FlagIcon /></TrayButton>
          <TrayButton aria-label="Volume"><SpeakerIcon /></TrayButton>
          <TrayButton aria-label="Power"><PowerIcon /></TrayButton>
          <TrayButton aria-label="Network"><NetworkIcon /></TrayButton>
          <Clock>
            4:45 PM
            <br />
            07 Jan 2025
          </Clock>
          <ShowDesktop aria-label="Show desktop" />
        </Tray>
      </Taskbar>
    </Desktop>
  );
}
